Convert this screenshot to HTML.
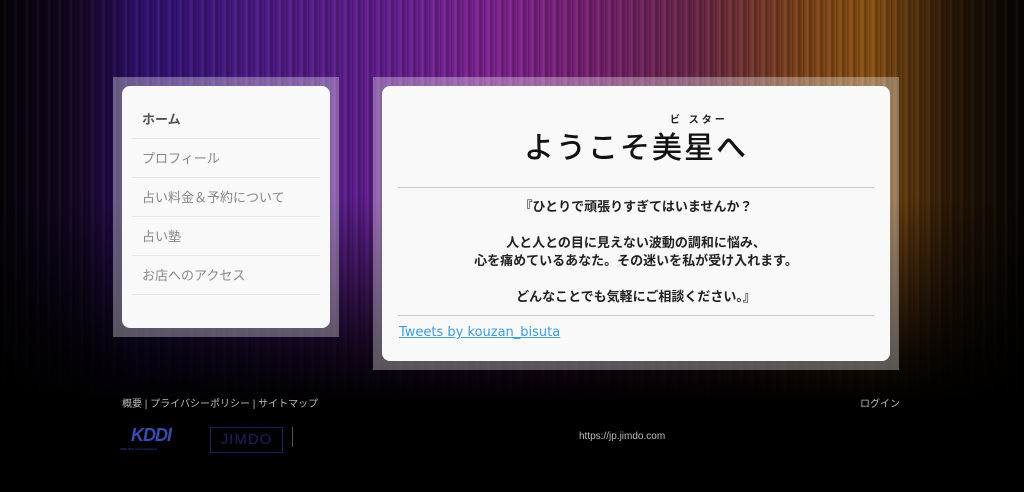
<!DOCTYPE html>
<html><head><meta charset="utf-8"><style>
*{margin:0;padding:0;box-sizing:border-box}
body{width:1024px;height:492px;overflow:hidden;background:#000;font-family:"Liberation Sans","Noto Sans CJK JP",sans-serif;position:relative}
.bg{position:absolute;left:0;top:0;width:1024px;height:492px;
background:
linear-gradient(to bottom,rgba(0,0,0,0.15) 0%,rgba(0,0,0,0.15) 40%,rgba(0,0,0,0.85) 72%,#000 82%),
repeating-linear-gradient(90deg,rgba(0,0,0,0.25) 0px,rgba(0,0,0,0) 3px,rgba(255,255,255,0.05) 5px,rgba(0,0,0,0.3) 7px,rgba(0,0,0,0) 11px),
linear-gradient(90deg,#050208 0%,#1a0830 8%,#3a148a 14%,#5a20a0 24%,#7a25b0 38%,#9a2cb0 48%,#902888 58%,#803058 68%,#985020 78%,#a86418 85%,#301a06 93%,#050302 100%);}
.frame{position:absolute;background:rgba(255,255,255,0.32)}
.card{position:absolute;background:#f9f9f9;border-radius:8px}
.nav a{display:block;margin:0 10px;height:39px;line-height:39px;padding-left:10px;font-size:13px;color:#888;border-bottom:1px solid #e6e6e6;text-decoration:none}
.nav a.b{font-weight:bold;color:#555}
.c{text-align:center;font-size:13px;font-weight:bold;color:#222;line-height:18px}
hr{border:0;border-top:1px solid #ccc;margin:0 16px}
.ft{position:absolute;font-size:10px;color:#bbb}
</style></head><body>
<div class="bg"></div>
<div class="frame" style="left:113px;top:77px;width:226px;height:260px"></div>
<div class="card nav" style="left:122px;top:86px;width:208px;height:242px;padding-top:14px">
<a class="b">ホーム</a><a>プロフィール</a><a>占い料金＆予約について</a><a>占い塾</a><a>お店へのアクセス</a>
</div>
<div class="frame" style="left:373px;top:77px;width:526px;height:293px"></div>
<div class="card" style="left:382px;top:86px;width:508px;height:275px">
<div style="position:absolute;left:288px;top:25px;font-size:10px;color:#222;letter-spacing:3px;font-weight:bold">ビ&nbsp;スター</div>
<div style="position:absolute;left:0;width:508px;top:37px;text-align:center;font-size:30px;color:#111;letter-spacing:2px;font-family:'Noto Sans CJK JP',sans-serif;font-weight:500">ようこそ美星へ</div>
<div style="position:absolute;top:101px;left:0;width:508px"><hr>
<div class="c" style="margin-top:10px">『ひとりで頑張りすぎてはいませんか？<br><br>人と人との目に見えない波動の調和に悩み、<br>心を痛めているあなた。その迷いを私が受け入れます。<br><br>どんなことでも気軽にご相談ください。』</div>
<hr style="margin-top:9px">
<div style="margin:9px 17px;font:13px 'DejaVu Sans',sans-serif;color:#3a9ee0;text-decoration:underline">Tweets by kouzan_bisuta</div>
</div></div>
<div class="ft" style="left:122px;top:395px">概要 | プライバシーポリシー | サイトマップ</div>
<div class="ft" style="left:860px;top:395px">ログイン</div>
<div class="ft" style="left:579px;top:431px">https://jp.jimdo.com</div>
<div style="position:absolute;left:131px;top:425px;font:italic bold 18px 'Liberation Sans',sans-serif;color:#3a4bb0;letter-spacing:-1px">KDDI</div>
<div style="position:absolute;left:120px;top:447px;font-size:3px;color:#3a4bb0">KDDI Web Communications</div>
<div style="position:absolute;left:210px;top:427px;width:73px;height:26px;border:1px solid #1a2060;color:#1a2060;font-size:15px;text-align:center;line-height:24px;letter-spacing:1px">JIMDO</div>
<div style="position:absolute;left:292px;top:427px;width:1px;height:20px;background:#555"></div>
</body></html>
